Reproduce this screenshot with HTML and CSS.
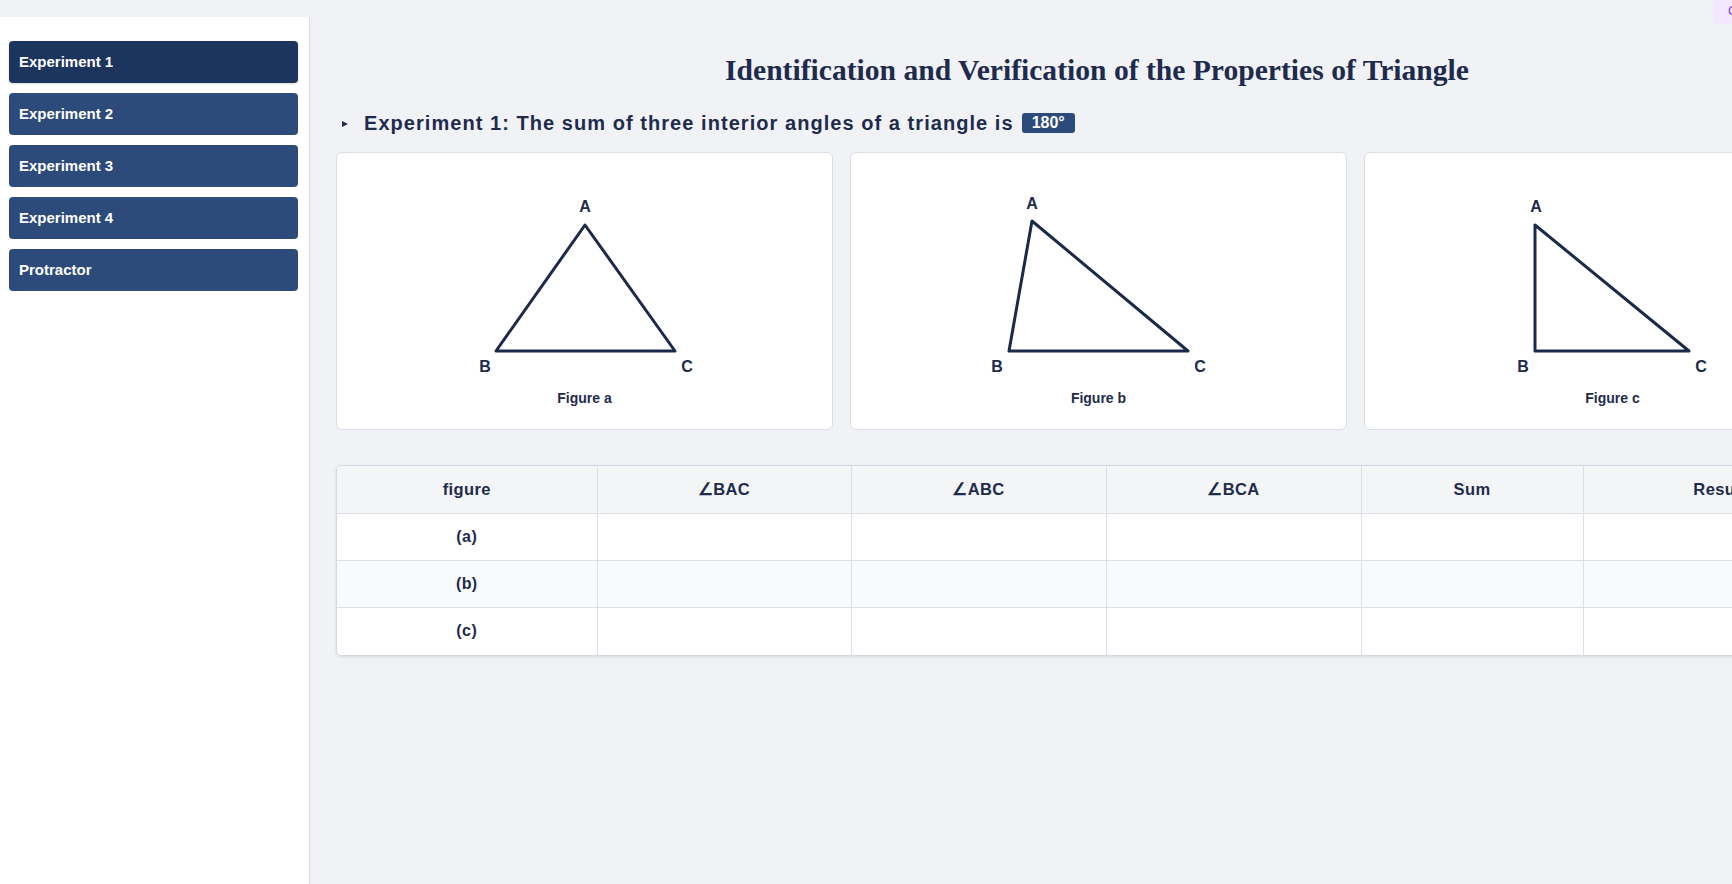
FILE: index.html
```html
<!DOCTYPE html>
<html lang="en">
<head>
<meta charset="utf-8">
<title>Properties of Triangle</title>
<link rel="stylesheet" href="styles.css">
</head>
<body>
<div class="topbar"></div>
<div class="corner-chip">Chat</div>
<div class="layout">
  <aside class="sidebar">
    <button class="nav-btn active">Experiment 1</button>
    <button class="nav-btn">Experiment 2</button>
    <button class="nav-btn">Experiment 3</button>
    <button class="nav-btn">Experiment 4</button>
    <button class="nav-btn">Protractor</button>
  </aside>
  <main class="main">
    <h1 class="title">Identification and Verification of the Properties of Triangle</h1>
    <h2 class="exp-heading">
      <svg class="marker" width="8" height="8" viewBox="0 0 8 8"><polygon points="1,1 7,4 1,7" fill="#1e2b4d"/></svg>
      <span>Experiment 1: The sum of three interior angles of a triangle is</span>
      <span class="badge">180°</span>
    </h2>
    <div class="cards">
      <div class="card">
        <svg class="fig" viewBox="0 0 495 236" width="495" height="236">
          <polygon points="248,72 159,198 338,198" class="tri"/>
          <text x="248" y="59" class="lbl">A</text>
          <text x="148" y="219" class="lbl">B</text>
          <text x="350" y="219" class="lbl">C</text>
        </svg>
        <div class="caption">Figure a</div>
      </div>
      <div class="card">
        <svg class="fig" viewBox="0 0 495 236" width="495" height="236">
          <polygon points="181,68 158,198 337,198" class="tri"/>
          <text x="181" y="56" class="lbl">A</text>
          <text x="146" y="219" class="lbl">B</text>
          <text x="349" y="219" class="lbl">C</text>
        </svg>
        <div class="caption">Figure b</div>
      </div>
      <div class="card">
        <svg class="fig" viewBox="0 0 495 236" width="495" height="236">
          <polygon points="170,72 170,198 324,198" class="tri"/>
          <text x="171" y="59" class="lbl">A</text>
          <text x="158" y="219" class="lbl">B</text>
          <text x="336" y="219" class="lbl">C</text>
        </svg>
        <div class="caption">Figure c</div>
      </div>
    </div>
    <div class="table-wrap">
      <table class="data">
        <colgroup>
          <col class="c1"><col class="c2"><col class="c3"><col class="c4"><col class="c5"><col class="c6">
        </colgroup>
        <thead>
          <tr><th>figure</th><th>∠BAC</th><th>∠ABC</th><th>∠BCA</th><th>Sum</th><th>Result</th></tr>
        </thead>
        <tbody>
          <tr><td>(a)</td><td></td><td></td><td></td><td></td><td></td></tr>
          <tr class="alt"><td>(b)</td><td></td><td></td><td></td><td></td><td></td></tr>
          <tr><td>(c)</td><td></td><td></td><td></td><td></td><td></td></tr>
        </tbody>
      </table>
    </div>
  </main>
</div>
</body>
</html>
```
FILE: styles.css
```css
* { box-sizing: border-box; }
html, body { margin: 0; padding: 0; }
body {
  width: 1732px;
  height: 884px;
  overflow: hidden;
  background: #f0f2f6;
  font-family: "Liberation Sans", Arial, sans-serif;
  color: #1e2b4d;
}
.topbar { height: 17px; }
.corner-chip {
  position: absolute;
  top: 0;
  left: 1713px;
  width: 60px;
  height: 24px;
  padding-left: 15px;
  background: #f3e8ff;
  border-bottom-left-radius: 6px;
  color: #7c3aed;
  font-size: 13px;
  line-height: 22px;
}
.layout {
  display: flex;
  height: 867px;
}
.sidebar {
  width: 310px;
  flex-shrink: 0;
  background: #ffffff;
  border-right: 1px solid #dcdfe6;
  padding: 24px 12px 0 9px;
  display: flex;
  flex-direction: column;
  gap: 10px;
}
.nav-btn {
  width: 289px;
  height: 42px;
  border: none;
  border-radius: 4px;
  background: #2c4a7a;
  color: #ffffff;
  font-family: "Liberation Sans", Arial, sans-serif;
  font-size: 15px;
  font-weight: bold;
  text-align: left;
  padding: 0 0 2px 10px;
}
.nav-btn.active {
  background: #1c355e;
  box-shadow: 0 1px 2px rgba(0, 0, 0, 0.15);
}
.main {
  flex-shrink: 0;
  width: 1548px;
  padding-left: 26px;
}
.title {
  width: 1522px;
  margin: 35px 0 0;
  font-family: "Liberation Serif", "Times New Roman", serif;
  font-size: 29.6px;
  line-height: 36px;
  font-weight: bold;
  text-align: center;
  color: #1e2b4d;
}
.exp-heading {
  margin: 21px 0 15px;
  height: 28px;
  display: flex;
  align-items: center;
  font-size: 20px;
  line-height: 28px;
  font-weight: bold;
  letter-spacing: 1.05px;
  color: #1e2b4d;
}
.marker {
  margin: 1px 15px 0 5px;
}
.badge {
  display: inline-block;
  margin-left: 8px;
  height: 20px;
  padding: 0 10px;
  background: #2c4a7a;
  color: #ffffff;
  border-radius: 3px;
  font-size: 16px;
  line-height: 20px;
  letter-spacing: 0;
}
.cards {
  width: 1522px;
  display: grid;
  grid-template-columns: repeat(3, 1fr);
  gap: 17px;
}
.card {
  height: 278px;
  background: #ffffff;
  border: 1px solid #d9dde5;
  border-radius: 6px;
}
.fig {
  display: block;
  margin: 0 auto;
}
.tri {
  fill: none;
  stroke: #1b2a4a;
  stroke-width: 3;
  stroke-linejoin: round;
}
.lbl {
  font-family: "Liberation Sans", Arial, sans-serif;
  font-size: 16px;
  font-weight: bold;
  fill: #1e2b4d;
  text-anchor: middle;
}
.caption {
  margin-top: -1px;
  text-align: center;
  font-size: 14px;
  line-height: 20px;
  font-weight: bold;
  color: #1e2b4d;
}
.table-wrap {
  margin-top: 35px;
  width: 1522px;
  border: 1px solid #d5dae2;
  border-radius: 5px;
  overflow: hidden;
  box-shadow: 0 1px 3px rgba(30, 43, 77, 0.12);
  background: #ffffff;
}
.data {
  width: 100%;
  border-collapse: collapse;
  table-layout: fixed;
}
.c1 { width: 260px; }
.c2 { width: 254px; }
.c3 { width: 255px; }
.c4 { width: 255px; }
.c5 { width: 222px; }
.c6 { width: auto; }
.data th, .data td {
  height: 47px;
  padding: 0;
  border-right: 1px solid #dcdfe6;
  border-bottom: 1px solid #dcdfe6;
  text-align: center;
  font-size: 16px;
  font-weight: bold;
  letter-spacing: 0.4px;
  color: #1e2b4d;
}
.data th {
  background: #f4f5f7;
  height: 47.5px;
  font-size: 16.5px;
}
.data tr:last-child td { border-bottom: none; }
.data tr.alt td { background: #f9fafb; }
```
